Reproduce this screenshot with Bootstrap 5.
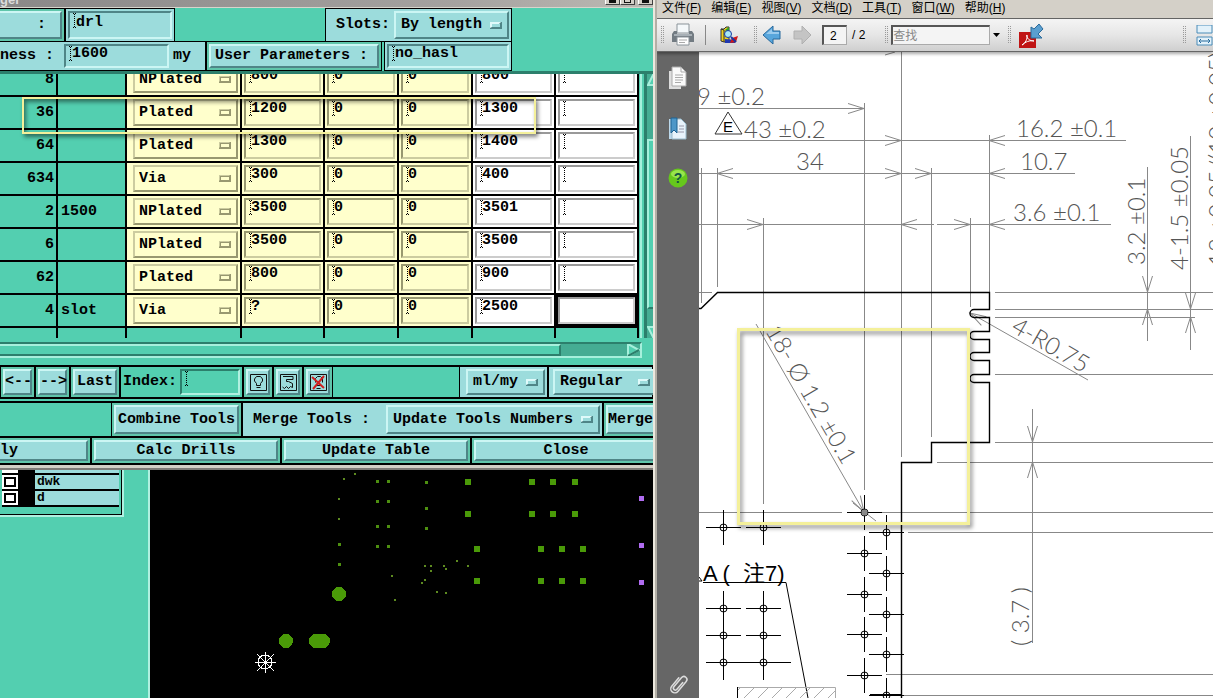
<!DOCTYPE html>
<html lang="zh-CN">
<head>
<meta charset="utf-8">
<meta name="viewport" content="width=device-width, initial-scale=1">
<title>Drill Tools Manager</title>
<link href="https://cdn.jsdelivr.net/npm/bootstrap@5.3.0/dist/css/bootstrap.min.css" rel="stylesheet">
<style>
:root{--green:#53cfb0;--aqua:#9cdcdc;--aqua-hi:#ccf6f4;--aqua-lo:#4f8587;--cream:#ffffcc}
body{font-family:"Liberation Sans","Noto Sans CJK SC",sans-serif;font-size:12px;line-height:16px;color:#000;background:#000}
.pane-left{flex:0 0 54%;min-width:0;border-right:2px solid #ece8de;background:var(--green);font:bold 15px/18px "Liberation Mono","Noto Sans CJK SC",monospace}
.pane-right{min-width:0;border-left:2px solid #b3afa6;background:#fff}
.pane-left input,.pane-left select,.pane-left button{font:inherit;color:#000;border-radius:0;white-space:nowrap}

/* dialog title strip */
.title-strip{height:8px;background:linear-gradient(90deg,#8a8888,#a5a2a0 70%,#bdbab4);border-bottom:1px solid #d8d4cc;color:#dcdcdc;font:bold 13px/13px "Liberation Sans",sans-serif}
.title-strip .cap{margin-top:-7px}
.win-btn{width:15px;height:5px;background:#d4d0c8;border:1px solid #404040;border-top:0;border-left-color:#fff}
.win-btn i{display:block;width:7px;height:3px;margin:0 auto;background:#111}
.win-btn.max i{background:#d4d0c8;border:1px solid #111;border-top:0}

/* framed cells and bevelled controls */
.strip{flex:none;min-width:0}
.strip-a{height:34px;width:512px}
.strip-b{height:30px;width:512px;margin-top:-1px}
.strip-c{height:34px;border-top:2px solid #000;border-bottom:2px solid #000;margin-top:7px}
.strip-d{height:35px;border-top:2px solid #000;margin-top:2px}
.strip-e{height:29px;border-top:2px solid #000;border-bottom:2px solid #000}
.framed{flex:none;display:flex;align-items:center;border:1px solid #000;background:var(--aqua);padding:2px}
.strip-c .framed,.strip-d .framed,.strip-e .framed{border-width:0 1px}
.framed.ring{background:#60c6ab}
.framed.plain{background:var(--green)}
.framed.runs-off{border-left:0;padding-left:0}
.runs-off .bevel{border-left:0;padding-right:14px}
.bevel{background:var(--aqua);border:2px solid;border-color:var(--aqua-hi) var(--aqua-lo) var(--aqua-lo) var(--aqua-hi);padding:0;height:100%;width:100%;text-align:center}
.sunk{background-color:var(--aqua);border:2px solid;border-color:var(--aqua-lo) var(--aqua-hi) var(--aqua-hi) var(--aqua-lo);padding:0 0 5px 6px;height:100%;min-width:0;outline:0}
.beam{background-image:url("data:image/svg+xml,%3Csvg xmlns='http://www.w3.org/2000/svg' width='4' height='15'%3E%3Cpath d='M1.5 1v13M0 .5h1M2 .5h1M0 14.5h1M2 14.5h1' stroke='%23000' stroke-dasharray='1 1' fill='none'/%3E%3C/svg%3E");background-repeat:no-repeat;background-position:3px 0}
.pick{appearance:none;outline:0;text-align:left;padding:0 0 0 5px;background-repeat:no-repeat;background-position:right 5px center;background-image:url("data:image/svg+xml,%3Csvg xmlns='http://www.w3.org/2000/svg' width='12' height='7'%3E%3Cpath d='M0 0h12v7H0z' fill='%234f8587'/%3E%3Cpath d='M0 0h11l-2 2H2v3l-2 1z' fill='%23dffafa'/%3E%3Cpath d='M2 2h8v3H2z' fill='%239cdcdc'/%3E%3C/svg%3E")}
.w-label{width:65px}.w-drl{width:110px}.w-slots{width:187px}.w-thick{width:206px}.w-user{width:176px}.w-hasl{width:128px}
.in-thick{width:105px}.sel-len{width:115px}
.w-prev{width:35px}.w-last{width:50px}.w-index{width:123px}.in-index{width:60px}
.w-ico{width:30px}.w-unit{width:89px}.w-reg{width:105px}.sel-unit{width:79px}.sel-reg{width:104px;flex:none}
.w-comb{width:131px}.w-merge{width:361px}.sel-upd{width:214px}.w-act{width:190px}.w-act0{width:91px}
.sunk.in-index{background-color:var(--green);border-color:#2c7f6c #b0f0e0 #b0f0e0 #2c7f6c}

/* drill table */
.grid-wrap{border-top:3px solid #2c7f6c}
.grid-view{height:264px;overflow:hidden;width:640px;position:relative}
.drills{table-layout:fixed;border-collapse:separate;border-spacing:0;width:639px}
.drills td{height:33px;padding:2px;border-right:2px solid #000;border-bottom:2px solid #000;vertical-align:middle;line-height:18px}
.drills tr.tail td{height:10px;padding:0;border-bottom:0}
.drills .k1{width:58px;text-align:right}.drills .k2{width:69px;padding-left:3px}.drills .k3{width:115px;padding-left:6px;background:var(--cream)}
.drills .k4{width:83px;background:var(--cream)}.drills .k5{width:74px;background:var(--cream)}.drills .k6{width:83px;background:#fff}
.drills .tail td{background:var(--green)}
.drills input,.drills select{display:block;width:100%;height:27px}
.drills input{background-color:transparent;border:2px solid;border-color:#989870 #cccca0 #cccca0 #989870;padding:0 0 8px 5px;outline:0;min-width:0}
.drills .k6 input{border-color:#999 #ccc #ccc #999}
.drills select{background-color:var(--cream);border:2px solid;border-color:#cccca0 #989870 #989870 #cccca0;padding-left:4px;background-image:url("data:image/svg+xml,%3Csvg xmlns='http://www.w3.org/2000/svg' width='12' height='7'%3E%3Cpath d='M0 0h12v7H0z' fill='%23989870'/%3E%3Cpath d='M0 0h11l-1 1H1v4l-1 1z' fill='%23cccca0'/%3E%3Cpath d='M2 2h8v3H2z' fill='%23ffffcc'/%3E%3C/svg%3E")}
.drills td.active{box-shadow:inset 0 0 0 3px #000;background:#000}
.drills td.active input{background:#fff}
.mark-row{position:absolute;left:22px;top:23px;width:514px;height:37px;border:2px solid #f4f09a;box-shadow:2px 3px 4px #0007,inset 2px 3px 4px #0007}
.vgap{width:6px;border-left:2px solid #a6f0dc;border-right:1px solid #2c7f6c}
.vbar{border-left:2px solid #2c7f6c;background:#45ac93;overflow:hidden}
.vbar svg{display:block;flex:none}
.vthumb{margin:53px 0 17px;flex:1;background:var(--green);border:2px solid #a6f0dc;border-right:0;border-bottom-color:#2c7f6c}
.hscroll{margin-top:4px;height:16px;border-top:2px solid #2c7f6c;border-bottom:2px solid #a6f0dc;border-right:2px solid #a6f0dc;width:642px;background:#45ac93}
.hthumb{width:561px;border-top:2px solid #a6f0dc;border-right:2px solid #2c7f6c;border-bottom:2px solid #2c7f6c;background:var(--green)}
.frame-end{height:5px;background:#d2cfc6;border-bottom:2px solid #7d7b77}

/* layer list and board view */
.side-list{width:150px;flex:none;border-right:2px solid #b0f0e0;font-size:13px;line-height:14px}
.layers{width:124px;height:47px;border-right:2px solid #b0f0e0;border-bottom:2px solid #b0f0e0;overflow:hidden}
.layers ul{border-right:1px solid #000;border-bottom:1px solid #000;height:45px;padding:0 2px 0 2px}
.layers li{height:16px;background:#000;border-bottom:2px solid #000}
.layers li.cut{height:5px}
.layers input{appearance:none;flex:none;width:16px;height:14px;margin:0;background:#fff;box-shadow:inset 0 0 0 2px #fff,inset 0 0 0 4px #000}
.layers .cut input{height:3px}
.layers label{margin-left:17px;flex:1;background:var(--aqua);padding-left:2px}

/* reader */
.menu-line{height:19px;background:#d4d0c8;border-bottom:1px solid #666;padding:0 5px;gap:10px}
.menu-line a{color:#000;text-decoration:none;white-space:nowrap;line-height:16px}
.tools{height:33px;background:linear-gradient(#f4f4f4,#e6e6e6 50%,#cfcfcf);border-bottom:1px solid #666;box-shadow:0 2px 3px #0005;position:relative;overflow:hidden}
.tools>*{flex:none}
.tools button,.rail button{border:0;background:none;padding:0;line-height:0}
.grip{width:4px;height:18px;background:conic-gradient(#999 25%,transparent 0) 0 0/2px 2px}
.divide{width:1px;height:20px;background:#888}
.tools input{border:1px solid #aaa;border-top:2px solid #555;border-left:2px solid #555;background:#f4f4f4;height:20px;padding:0;outline:0;color:#000;border-radius:0}
.tools .pageno{width:25px;padding-left:6px}
.tools .find{width:99px}
.tools .find::placeholder{color:#888;opacity:1}
.m3{margin-left:3px}.m7{margin-left:7px}.m10{margin-left:10px}.m14{margin-left:14px}.m19{margin-left:19px}.m5{margin-left:5px}
.rail{width:42px;flex:none;background:#666;padding:14px 0 0}
.rail .gap-mid{margin-top:27px}
.plan{min-width:0;overflow:hidden}
.plan svg,.board svg{display:block;width:100%;height:100%}
.board{min-width:0;background:#000}
.dim{font-family:Lato,"Open Sans",sans-serif;font-weight:300;font-size:24px;fill:#555}
</style>
</head>
<body class="vh-100 d-flex overflow-hidden">

<section class="pane-left d-flex flex-column overflow-hidden">
  <div class="title-strip d-flex flex-shrink-0 overflow-hidden"><span class="cap flex-grow-1">ger</span><span class="win-btn"><i></i></span><span class="win-btn max"><i></i></span><span class="win-btn m3"><i></i></span></div>

  <div class="strip strip-a d-flex">
    <div class="framed ring runs-off w-label"><button class="bevel text-end">:</button></div>
    <div class="framed w-drl me-auto"><input class="sunk beam w-100" value="drl" aria-label="Drill layer"></div>
    <div class="framed w-slots"><label class="flex-grow-1 ps-2" for="slots">Slots:</label><select id="slots" class="bevel pick sel-len"><option>By length</option></select></div>
  </div>
  <div class="strip strip-b d-flex">
    <div class="framed runs-off w-thick"><label class="flex-grow-1" for="thick">ness :</label><input id="thick" class="sunk beam in-thick" value="1600"><span class="ps-1 pe-2 me-1">my</span></div>
    <div class="framed ring w-user me-auto"><button class="bevel text-start ps-1">User Parameters :</button></div>
    <div class="framed w-hasl"><input class="sunk beam w-100" value="no_hasl" aria-label="User parameters"></div>
  </div>

  <div class="grid-wrap d-flex flex-shrink-0">
    <div class="grid-view d-flex flex-column justify-content-end flex-shrink-0">
      <table class="drills"><tbody id="rows"></tbody></table>
      <div class="mark-row"></div>
    </div>
    <div class="vgap"></div>
    <div class="vbar d-flex flex-column flex-grow-1"><svg width="13" height="12"><path d="M6 1L12 11H1z" fill="#53cfb0" stroke="#a6f0dc" stroke-width="2"/></svg><div class="vthumb"></div><svg width="13" height="12"><path d="M1 1H12L6 11z" fill="#53cfb0" stroke="#a6f0dc" stroke-width="2"/></svg></div>
  </div>
  <div class="hscroll d-flex flex-shrink-0"><div class="hthumb"></div>
    <svg class="ms-auto" width="13" height="12"><path d="M1 0L12 6 1 12z" fill="#53cfb0" stroke="#a6f0dc" stroke-width="2"/><path d="M1 12L12 6" stroke="#2c7f6c" stroke-width="2"/></svg></div>

  <div class="strip strip-c d-flex">
    <div class="framed ring w-prev ms-0"><button class="bevel">&lt;--</button></div>
    <div class="framed ring w-prev"><button class="bevel">--&gt;</button></div>
    <div class="framed ring w-last"><button class="bevel">Last</button></div>
    <div class="framed plain w-index"><label class="flex-grow-1" for="idx">Index:</label><input id="idx" class="sunk beam in-index"></div>
    <div class="framed ring w-ico"><button class="bevel lh-1" aria-label="Highlight"><svg width="17" height="17" fill="none" stroke="#111"><path d="M.5.5h16v16H.5zM6.500 11.500V9.500L4.500 7V5L6.500 2.500h4L12.500 5v2l-2 2.500v2zM6.500 13.500h4"/></svg></button></div>
    <div class="framed ring w-ico"><button class="bevel lh-1" aria-label="Replace"><svg width="17" height="17" fill="none" stroke="#111"><path d="M.5.500h16v16H.5zM3 2.500h10v3H6.500v2h2l4 2v4l-2-1-2 2-2-2-2 2-2-1.500"/></svg></button></div>
    <div class="framed ring w-ico"><button class="bevel lh-1" aria-label="Clear"><svg width="17" height="17" fill="none" stroke="#111"><path d="M.5.500h16v16H.5zM5.500 8.500v-4l2-2h3l2 2v4M6 11.500h5M6.500 14.500h4"/><path d="M2 3l12 11M14 2L3 15" stroke="#d02020" stroke-width="2"/></svg></button></div>
    <div class="framed w-unit ms-auto justify-content-end"><select class="bevel pick sel-unit" aria-label="Units"><option>ml/my</option></select></div>
    <div class="framed w-reg ps-1"><select class="bevel pick sel-reg" aria-label="Mode"><option>Regular</option></select></div>
  </div>
  <div class="strip strip-d d-flex justify-content-end">
    <div class="framed ring w-comb"><button class="bevel">Combine Tools</button></div>
    <div class="framed w-merge"><label class="flex-grow-1 ps-2" for="upd">Merge Tools :</label><select id="upd" class="bevel pick sel-upd"><option>Update Tools Numbers</option></select></div>
    <div class="framed ring w-last pe-0 border-end-0"><button class="bevel border-end-0">Merge</button></div>
  </div>
  <div class="strip strip-e d-flex">
    <div class="framed ring runs-off w-act0"><button class="bevel text-start">ly</button></div>
    <div class="framed ring w-act"><button class="bevel">Calc Drills</button></div>
    <div class="framed ring w-act"><button class="bevel">Update Table</button></div>
    <div class="framed ring w-act"><button class="bevel">Close</button></div>
  </div>
  <div class="frame-end flex-shrink-0"></div>

  <div class="d-flex flex-grow-1 overflow-hidden">
    <div class="side-list"><div class="layers"><ul class="list-unstyled m-0">
      <li class="cut d-flex"><input type="checkbox" id="l0" aria-label="layer"><label for="l0"></label></li>
      <li class="d-flex"><input type="checkbox" id="l1"><label for="l1">dwk</label></li>
      <li class="d-flex"><input type="checkbox" id="l2"><label for="l2">d</label></li>
    </ul></div></div>
    <div class="board flex-grow-1"><svg><g id="dots" transform="translate(-150 -470)" fill="#4a9a08" shape-rendering="crispEdges">
      <circle cx="339" cy="594" r="7"/><circle cx="286" cy="641" r="7"/><rect x="309" y="634" width="21" height="14" rx="7"/>
      <g stroke="#fff" fill="none"><circle cx="265" cy="662" r="7"/><path d="M265.500 652v21M255 662.500h21M257 654l17 17M274 654l-17 17"/></g>
    </g></svg></div>
  </div>
</section>

<section class="pane-right d-flex flex-column flex-grow-1 overflow-hidden">
  <nav class="menu-line d-flex flex-shrink-0">
    <a href="#">文件(<u>F</u>)</a><a href="#">编辑(<u>E</u>)</a><a href="#">视图(<u>V</u>)</a><a href="#">文档(<u>D</u>)</a><a href="#">工具(<u>T</u>)</a><a href="#">窗口(<u>W</u>)</a><a href="#">帮助(<u>H</u>)</a>
  </nav>
  <div class="tools d-flex align-items-center flex-shrink-0">
    <span class="grip m3"></span>
    <button class="m7" aria-label="打印"><svg width="24" height="24"><path d="M6 1h12v9H6z" fill="#f4f8fa" stroke="#8a9399"/><path d="M3 8h3v3h12V8h3l2 3v8H1v-8z" fill="#727b82"/><path d="M3 12h18" stroke="#a8b0b6" stroke-width="2"/><path d="M6 14h12v8H6z" fill="#fff" stroke="#8a9399"/><path d="M8 17h8M8 19.500h6" stroke="#aaa"/></svg></button>
    <span class="divide m10"></span>
    <button class="m14" aria-label="扫描"><svg width="19" height="19"><path d="M1 3l3 1v12l-3-1zM1 3h3l2-2h3v15H4" fill="#f0d020" stroke="#333"/><path d="M5 4l4-3v6z" fill="#28a030"/><path d="M5 13l11 1-1 3H5z" fill="#2038b0"/><path d="M12 12l6-2-2 6-6 1z" fill="#d01818"/><circle cx="8" cy="8" r="3.500" fill="#a8e8f8" stroke="#1838a0"/><path d="M11 11l5 5" stroke="#1838a0" stroke-width="2"/></svg></button>
    <span class="grip m14"></span>
    <button class="m5" aria-label="上一页"><svg width="20" height="20"><path d="M1 10L11 1v5h7v8h-7v5z" fill="#58a6dc" stroke="#27689c"/><path d="M4 9l6-5v3h7v2z" fill="#9acbee"/></svg></button>
    <button class="m10" aria-label="下一页"><svg width="20" height="20"><path d="M19 10L10 1v5H2v8h8v5z" fill="#c4c4c4" stroke="#b0b0b0"/></svg></button>
    <input class="pageno m10" value="2" aria-label="页码"><span class="m5">/ 2</span>
    <span class="grip m19"></span>
    <input class="find m3" placeholder="查找" aria-label="查找">
    <svg class="m3" width="7" height="4"><path d="M0 0h7L3.500 4z"/></svg>
    <span class="grip m7"></span>
    <button class="m7" aria-label="PDF"><svg width="27" height="25"><path d="M1 9h17v16H1z" fill="#c01414"/><path d="M4 22c3-1 6-7 5-10-1 0 0 6 7 6-4-1-9 1-12 4" fill="none" stroke="#fff"/><path d="M13 4v11h11l-4-4 5-5-4-5-5 5z" fill="#5a9fd0" stroke="#2b6a9a"/></svg></button>
    <span class="grip ms-auto"></span>
    <button class="m10" aria-label="适合宽度"><svg width="17" height="21"><path d="M1 0h15v8H1zM1 12h15v8H1z" fill="#e2f1fa" stroke="#4a8cb8"/><path d="M3 16h11M5 14l-2 2 2 2M12 14l2 2-2 2" fill="none" stroke="#246a9c"/></svg></button>
  </div>

  <div class="d-flex flex-grow-1 overflow-hidden">
    <div class="rail d-flex flex-column align-items-center">
      <button aria-label="页面"><svg width="20" height="24"><path d="M1 5h12v18H1z" fill="#ddd"/><path d="M4 1h9l5 5v14H4z" fill="#fafafa" stroke="#aaa"/><path d="M13 1v5h5M7 9h8M7 11.500h8M7 14h8M7 16.500h6" stroke="#aaa" fill="none"/></svg></button>
      <button class="gap-mid" aria-label="书签"><svg width="20" height="24"><path d="M1 2h6v20H1z" fill="#bcd8ea"/><path d="M4 2h9l5 5v15H4z" fill="#e8f3fb" stroke="#9bc"/><path d="M3 1h6v15l-3-3-3 3z" fill="#4d97c8" stroke="#1f6292"/><path d="M11 9h5M11 12h5M10 15h6" stroke="#99a"/></svg></button>
      <button class="gap-mid" aria-label="帮助"><svg width="21" height="21"><circle cx="10" cy="10" r="9.500" fill="#66c81c"/><ellipse cx="10" cy="6" rx="7" ry="4" fill="#98e44c"/><text x="10" y="15" font-size="14" font-weight="bold" text-anchor="middle" fill="#154">?</text></svg></button>
      <button class="mt-auto" aria-label="附件"><svg width="24" height="26"><g fill="none" stroke-linecap="round" transform="rotate(40 12 13)"><path d="M8 7v11a4 4 0 0 0 8 0V5a3 3 0 0 0-6 0v12a2 2 0 0 0 4 0V8" stroke="#ddd" stroke-width="1.500"/></g></svg></button>
    </div>
    <div class="plan flex-grow-1"><svg><defs>
      <path id="ar" d="M-16-5L0 0-16 5"/>
      <filter id="sh" x="-5%" y="-5%" width="115%" height="115%"><feDropShadow dx="2" dy="3" stdDeviation="2" flood-opacity=".5"/></filter>
      <pattern id="hatch" width="14" height="14" patternUnits="userSpaceOnUse"><path d="M-1 15L15-1" stroke="#aaa"/></pattern></defs>
      <g transform="translate(-699 -52)">
      <g fill="none" stroke="#888" id="grey">
        <path d="M901.500 52V457M864.500 103V490M989.500 135V292M931.500 168V437M717.500 168V287M701.500 168V303M763.500 218V504M970.500 218V307M699 292.500h13"/>
        <path d="M699 108.500H864M699 140.500H1126M699 173.500H1075M699 224.500H934M937 224.500H1111"/>
        <path d="M995 292.500H1213M995 309.500H1213M995 317.500H1195M995 374.500H1213M995 442.500H1213M937 462.500H1213M699 512.500H842M882 512.500H1213M908 532.500H1213M886 674.500H1213M903 695.500H1213"/>
        <path d="M1147.500 167V341M1190.500 136V350M1032.500 409V643M756 324L864 512M853 503l23 18M972 314L1088 380M885 55l10-3"/>
        <use href="#ar" x="864" y="108.500"/><use href="#ar" x="901" y="140.500"/><use href="#ar" x="901" y="173.500"/><use href="#ar" x="931" y="173.500"/><use href="#ar" x="763" y="224.500"/><use href="#ar" x="970" y="224.500"/>
        <use href="#ar" transform="translate(989 140.500) rotate(180)"/><use href="#ar" transform="translate(989 173.500) rotate(180)"/><use href="#ar" transform="translate(989 224.500) rotate(180)"/><use href="#ar" transform="translate(717 173.500) rotate(180)"/><use href="#ar" transform="translate(901 224.500) rotate(180)"/>
        <use href="#ar" transform="translate(1147.500 292) rotate(90)"/><use href="#ar" transform="translate(1190.500 309) rotate(90)"/><use href="#ar" transform="translate(1032.500 442) rotate(90)"/>
        <use href="#ar" transform="translate(1147.500 309) rotate(-90)"/><use href="#ar" transform="translate(1190.500 317) rotate(-90)"/><use href="#ar" transform="translate(1032.500 462) rotate(-90)"/>
        <use href="#ar" transform="translate(970 313) rotate(210)"/><use href="#ar" transform="translate(864 512) rotate(60)"/>
      </g>
      <g class="dim">
        <text x="697" y="105">9 ±0.2</text><text x="744" y="138">43 ±0.2</text><text x="796" y="170">34</text>
        <text x="1016" y="137">16.2 ±0.1</text><text x="1020" y="170">10.7</text><text x="1013" y="221">3.6 ±0.1</text>
        <text transform="translate(1145 265) rotate(-90)">3.2 ±0.1</text><text transform="translate(1188 270) rotate(-90)">4-1.5 ±0.05</text>
        <text transform="translate(1226 266) rotate(-90)">12 ±0.05/(10 ±0.05)</text><text transform="translate(1029 646) rotate(-90)">( 3.7 )</text>
        <text transform="translate(765 331) rotate(60)">18- Ø 1.2 ±0.1</text><text transform="translate(1010 331) rotate(30)">4-R0.75</text>
      </g>
      <path d="M728 112l-13 22h27z" fill="none" stroke="#333"/><text x="723" y="132" font-size="15">E</text>
      <g fill="none" stroke="#000" id="ink">
        <path stroke-width="1.400" d="M699 308.500h2L717.500 292.500H989.500V309.500H974a4 4 0 0 0 0 8H989.500V331.500H974a4 4 0 0 0 0 8H989.500V352.500H974a4 4 0 0 0 0 8H989.500V374.500H974a4 4 0 0 0 0 8H989.500V442.500H931.500V462.500H901.500V698"/>
        <path d="M703 582.500H786L808 698M699 577l3 4h-3M723.500 591V680M763.500 591V680M723 662.500H791M723.500 510V545M763.500 510V545M870 694.500H901"/>
      </g>
      <circle cx="864.500" cy="512.500" r="3" fill="#888"/>
      <text x="703" y="581" font-size="22">A (</text><text x="743" y="581" font-size="22">注7)</text>
      <path d="M737.500 700V687.500H835.500V700" fill="url(#hatch)" stroke="#aaa"/><path d="M737.500 687V700" stroke="#000"/>
      <rect x="738.500" y="329.500" width="230" height="194" fill="none" stroke="#f4f09a" stroke-width="3" filter="url(#sh)"/>
      </g></svg></div>
  </div>
</section>

<script src="https://cdn.jsdelivr.net/npm/bootstrap@5.3.0/dist/js/bootstrap.bundle.min.js"></script>
<script>
// count, note, hole type, finish size, drill size
const drills = [[8,'','NPlated','800','800'],[36,'','Plated','1200','1300'],[64,'','Plated','1300','1400'],[634,'','Via','300','400'],
  [2,'1500','NPlated','3500','3501'],[6,'','NPlated','3500','3500'],[62,'','Plated','800','900'],[4,'slot','Via','?','2500']];
const box = (v, n) => `<input class="beam" value="${v}" aria-label="${n}">`;
document.getElementById('rows').innerHTML = drills.map((d, i) => `<tr><td class="k1">${d[0]}</td><td class="k2">${d[1]}</td>
  <td class="k3"><select class="pick" aria-label="Type"><option>${d[2]}</option></select></td><td class="k4">${box(d[3], 'Finish')}</td>
  <td class="k5">${box('0', 'Plus')}</td><td class="k5">${box('0', 'Minus')}</td><td class="k6">${box(d[4], 'Drill')}</td>
  <td class="k6${i === 7 ? ' active' : ''}">${i === 7 ? '<input aria-label="Des">' : box('', 'Des')}</td></tr>`).join('') +
  '<tr class="tail">' + '<td></td>'.repeat(8) + '</tr>';

// drilled holes on the board, grouped by size
const NS = 'http://www.w3.org/2000/svg';
const add = (parent, tag, attrs) => { const e = document.createElementNS(NS, tag); for (const k in attrs) e.setAttribute(k, attrs[k]); parent.append(e); };
const dots = document.getElementById('dots');
const plot = (size, pts, fill) => pts.forEach(([x, y]) => add(dots, 'rect', {x: x - (size >> 1), y: y - (size >> 1), width: size, height: size, rx: size > 4 ? 1 : 0, fill}));
plot(2, [[344,479],[355,474],[339,499],[339,519],[392,576],[395,600],[425,566],[431,566],[444,566],[446,569],[431,571],[457,561],[468,566],[425,580],[422,583],[437,592],[446,593]], '#5d8a20');
plot(3, [[339,544],[339,564],[426,482],[426,508],[426,528],...[481,501,526,546].flatMap(y => [[377,y],[388,y]])], '#4d8f10');
plot(6, [482,514].flatMap(y => [468,532,553,575].map(x => [x,y])).concat([549,581].flatMap(y => [477,541,562,583].map(x => [x,y]))), '#4a9a08');
plot(5, [[641,498],[641,545],[641,582]], '#b06cf0');

// plated holes on the plan: centre circle with cross hairs
const ink = document.getElementById('ink');
const hole = (x, y, v) => { add(ink, 'circle', {cx: x + .5, cy: y + .5, r: 3.5}); add(ink, 'path', {d: `M${x - 17} ${y + .5}h35` + (v ? `M${x + .5} ${y - 17}v35` : '')}); };
[527,608,635,662].forEach(y => [723,763].forEach(x => hole(x, y, false)));
[512,553,594,634,675].forEach(y => hole(864, y, true));
[532,573,614,654,695].forEach(y => hole(886, y, true));
</script>
</body>
</html>
